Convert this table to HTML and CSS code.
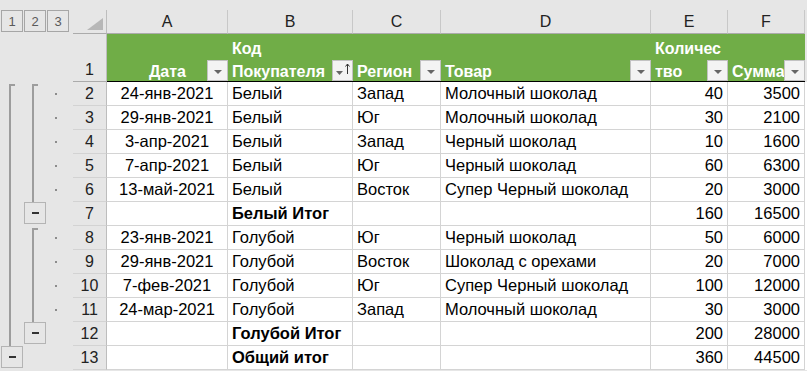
FILE: index.html
```
<!DOCTYPE html>
<html lang="ru">
<head>
<meta charset="utf-8">
<link rel="stylesheet" href="styles.css">
</head>
<body>
<div class="sheet">
  <div class="row colhead">
    <div class="levels"><span class="lvl">1</span><span class="lvl">2</span><span class="lvl">3</span></div>
    <div class="corner"><svg width="16" height="12" viewBox="0 0 16 12"><polygon points="16,0 16,12 0,12" fill="#b7b7b7"/></svg></div>
    <div class="col">A</div>
    <div class="col">B</div>
    <div class="col">C</div>
    <div class="col">D</div>
    <div class="col">E</div>
    <div class="col">F</div>
    <div class="rest"></div>
  </div>

  <div class="row hdr">
    <div class="outline"></div>
    <div class="rh">1</div>
    <div class="hc"><span class="ht right">Дата</span><span class="fb"></span></div>
    <div class="hc"><span class="ht">Код<br>Покупателя</span><span class="fb sort"><svg width="19" height="19" viewBox="0 0 19 19"><polygon points="3,10 10,10 6.5,14" fill="#666"/><path d="M14.5 3 V13" stroke="#333" stroke-width="1"/><path d="M12.5 5.5 L14.5 3 L16.5 5.5" stroke="#333" stroke-width="1" fill="none"/></svg></span></div>
    <div class="hc"><span class="ht">Регион</span><span class="fb"></span></div>
    <div class="hc"><span class="ht">Товар</span><span class="fb"></span></div>
    <div class="hc"><span class="ht">Количес<br>тво</span><span class="fb"></span></div>
    <div class="hc"><span class="ht">Сумма</span><span class="fb"></span></div>
    <div class="rest"></div>
  </div>

  <div class="row">
    <div class="outline"><i class="s1 line top"></i><i class="s2 line top"></i><i class="s3 dot"></i></div>
    <div class="rh">2</div>
    <div class="c ctr">24-янв-2021</div><div class="c">Белый</div><div class="c">Запад</div><div class="c">Молочный шоколад</div><div class="c num">40</div><div class="c num">3500</div><div class="rest"></div>
  </div>
  <div class="row">
    <div class="outline"><i class="s1 line"></i><i class="s2 line"></i><i class="s3 dot"></i></div>
    <div class="rh">3</div>
    <div class="c ctr">29-янв-2021</div><div class="c">Белый</div><div class="c">Юг</div><div class="c">Молочный шоколад</div><div class="c num">30</div><div class="c num">2100</div><div class="rest"></div>
  </div>
  <div class="row">
    <div class="outline"><i class="s1 line"></i><i class="s2 line"></i><i class="s3 dot"></i></div>
    <div class="rh">4</div>
    <div class="c ctr">3-апр-2021</div><div class="c">Белый</div><div class="c">Запад</div><div class="c">Черный шоколад</div><div class="c num">10</div><div class="c num">1600</div><div class="rest"></div>
  </div>
  <div class="row">
    <div class="outline"><i class="s1 line"></i><i class="s2 line"></i><i class="s3 dot"></i></div>
    <div class="rh">5</div>
    <div class="c ctr">7-апр-2021</div><div class="c">Белый</div><div class="c">Юг</div><div class="c">Черный шоколад</div><div class="c num">60</div><div class="c num">6300</div><div class="rest"></div>
  </div>
  <div class="row">
    <div class="outline"><i class="s1 line"></i><i class="s2 line"></i><i class="s3 dot"></i></div>
    <div class="rh">6</div>
    <div class="c ctr">13-май-2021</div><div class="c">Белый</div><div class="c">Восток</div><div class="c">Супер Черный шоколад</div><div class="c num">20</div><div class="c num">3000</div><div class="rest"></div>
  </div>
  <div class="row">
    <div class="outline"><i class="s1 line"></i><i class="s2 minus"></i></div>
    <div class="rh">7</div>
    <div class="c ctr"></div><div class="c b">Белый Итог</div><div class="c"></div><div class="c"></div><div class="c num">160</div><div class="c num">16500</div><div class="rest"></div>
  </div>
  <div class="row">
    <div class="outline"><i class="s1 line"></i><i class="s2 line top"></i><i class="s3 dot"></i></div>
    <div class="rh">8</div>
    <div class="c ctr">23-янв-2021</div><div class="c">Голубой</div><div class="c">Юг</div><div class="c">Черный шоколад</div><div class="c num">50</div><div class="c num">6000</div><div class="rest"></div>
  </div>
  <div class="row">
    <div class="outline"><i class="s1 line"></i><i class="s2 line"></i><i class="s3 dot"></i></div>
    <div class="rh">9</div>
    <div class="c ctr">29-янв-2021</div><div class="c">Голубой</div><div class="c">Восток</div><div class="c">Шоколад с орехами</div><div class="c num">20</div><div class="c num">7000</div><div class="rest"></div>
  </div>
  <div class="row">
    <div class="outline"><i class="s1 line"></i><i class="s2 line"></i><i class="s3 dot"></i></div>
    <div class="rh">10</div>
    <div class="c ctr">7-фев-2021</div><div class="c">Голубой</div><div class="c">Юг</div><div class="c">Супер Черный шоколад</div><div class="c num">100</div><div class="c num">12000</div><div class="rest"></div>
  </div>
  <div class="row">
    <div class="outline"><i class="s1 line"></i><i class="s2 line"></i><i class="s3 dot"></i></div>
    <div class="rh">11</div>
    <div class="c ctr">24-мар-2021</div><div class="c">Голубой</div><div class="c">Запад</div><div class="c">Молочный шоколад</div><div class="c num">30</div><div class="c num">3000</div><div class="rest"></div>
  </div>
  <div class="row">
    <div class="outline"><i class="s1 line"></i><i class="s2 minus"></i></div>
    <div class="rh">12</div>
    <div class="c ctr"></div><div class="c b">Голубой Итог</div><div class="c"></div><div class="c"></div><div class="c num">200</div><div class="c num">28000</div><div class="rest"></div>
  </div>
  <div class="row">
    <div class="outline"><i class="s1 minus"></i></div>
    <div class="rh">13</div>
    <div class="c ctr"></div><div class="c b">Общий итог</div><div class="c"></div><div class="c"></div><div class="c num">360</div><div class="c num">44500</div><div class="rest"></div>
  </div>
</div>
</body>
</html>
```

FILE: styles.css
```
* { box-sizing: border-box; }

body {
  margin: 0;
  background: #e6e6e6;
  font-family: "Liberation Sans", Arial, sans-serif;
  font-size: 16.5px;
  color: #000;
}

.sheet {
  width: 807px;
  overflow: hidden;
}

.row {
  display: grid;
  grid-template-columns: 73px 34px 121px 125px 88px 210px 77px 77px 2px;
  height: 24px;
}

.colhead { height: 34px; }
.hdr { height: 48px; }

/* outline level buttons */
.levels {
  margin-top: 10px;
  display: flex;
  gap: 1px;
  padding-left: 1px;
}
.lvl {
  width: 22px;
  height: 22px;
  border: 1px solid #a6a6a6;
  font-size: 13px;
  color: #5a5a5a;
  display: flex;
  align-items: center;
  justify-content: center;
}

.corner {
  margin-top: 10px;
  border-right: 1px solid #bdbdbd;
  border-bottom: 1px solid #ababab;
  display: flex;
  justify-content: flex-end;
  align-items: flex-end;
  padding: 0 3px 3px 0;
}

.col {
  margin-top: 10px;
  border-right: 1px solid #c8c8c8;
  border-bottom: 1px solid #ababab;
  text-align: center;
  line-height: 23px;
  font-size: 16px;
  color: #222;
}

/* header row */
.hc {
  background: #70ad47;
  color: #fff;
  font-weight: bold;
  font-size: 16px;
  display: flex;
  align-items: flex-end;
  border-bottom: 1px solid #000;
}
.ht {
  flex: 1;
  min-width: 0;
  line-height: 23px;
  margin-bottom: -2px;
  padding-left: 4px;
  white-space: nowrap;
}
.ht.right {
  text-align: right;
  padding-right: 21px;
}
.fb {
  flex: none;
  width: 21px;
  height: 21px;
  border: 1px solid #c2c2c2;
  background: #f3f3f3;
  display: flex;
  justify-content: center;
}
.fb::after {
  content: "";
  margin-top: 9px;
  width: 0;
  height: 0;
  border-left: 4px solid transparent;
  border-right: 4px solid transparent;
  border-top: 4px solid #666;
}
.fb.sort::after { display: none; }

/* row header */
.rh {
  border-right: 1px solid #bdbdbd;
  border-bottom: 1px solid #d3d3d3;
  text-align: center;
  line-height: 23px;
  font-size: 16px;
  color: #222;
}
.hdr .rh {
  display: flex;
  align-items: flex-end;
  justify-content: center;
  border-bottom-color: #ababab;
}

/* cells */
.c {
  background: #fff;
  border-right: 1px solid #d4d4d4;
  border-bottom: 1px solid #d4d4d4;
  line-height: 23px;
  padding: 0 4px;
  white-space: nowrap;
  overflow: hidden;
}
.ctr { text-align: center; }
.num { text-align: right; }
.b { font-weight: bold; }

.rest { background: #fff; }
.colhead .rest, .hdr .rest { background: #e6e6e6; }

/* outline bars */
.outline {
  display: grid;
  grid-template-columns: 23px 23px 23px 4px;
}
.s1 { grid-column: 1; }
.s2 { grid-column: 2; }
.s3 { grid-column: 3; }
.outline i { grid-row: 1; }

.line {
  margin-left: 9px;
  width: 6px;
  border-left: 2px solid #9d9d9d;
}
.line.top {
  margin-top: 2px;
  border-top: 2px solid #9d9d9d;
}
.dot {
  margin: 11px 0 0 9px;
  width: 2px;
  height: 2px;
  background: #8c8c8c;
}
.minus {
  margin-left: 1px;
  width: 22px;
  height: 22px;
  border: 1px solid #b4b4b4;
  display: flex;
  align-items: center;
  justify-content: center;
}
.minus::before {
  content: "";
  width: 7px;
  height: 2px;
  background: #333;
}
```
